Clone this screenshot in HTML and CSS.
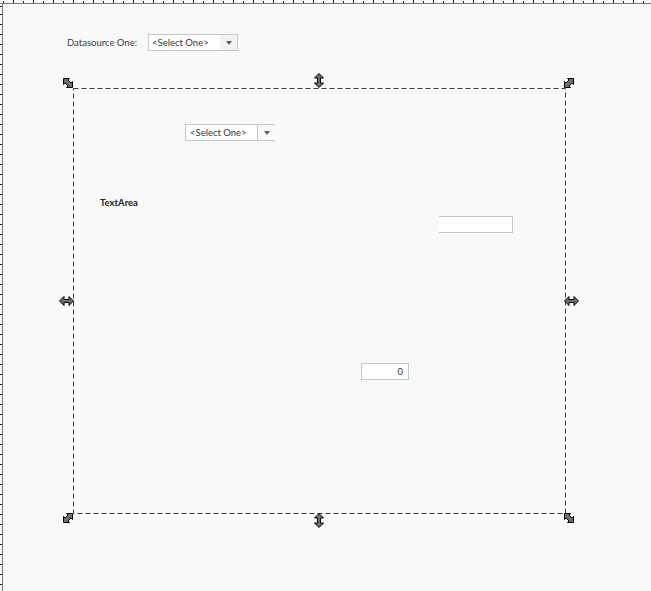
FILE: index.html
```html
<!DOCTYPE html>
<html lang="en">
<head>
    <meta charset="UTF-8">
    <meta name="viewport" content="width=device-width, initial-scale=1.0">
    <title>Form Designer</title>
    <link rel="stylesheet" href="styles.css">
</head>
<body>
    <div class="canvas">
        <div class="ruler-top"></div>
        <div class="ruler-left"></div>

        <!-- Datasource selector -->
        <div class="field-row datasource">
            <label class="field-label" for="ds1">Datasource One:</label>
            <div class="select" id="ds1">
                <span class="select-text">&lt;Select One&gt;</span>
                <span class="select-arrow"></span>
            </div>
        </div>

        <!-- Selected panel -->
        <div class="panel">
            <svg class="panel-border" width="494" height="427">
                <rect x="0.5" y="0.5" width="492" height="425" fill="none" stroke="#3c3c3c" stroke-dasharray="5 3"/>
            </svg>
        </div>

        <div class="select select-inner">
            <span class="select-text">&lt;Select One&gt;</span>
            <span class="select-arrow split"></span>
        </div>

        <div class="textarea-label">TextArea</div>
        <div class="text-input"></div>
        <div class="number-input">0</div>

        <!-- Resize handles -->
        <svg class="handle h-tl" width="10" height="10" viewBox="0 0 10 10"><polygon points="0.5,0.5 6.5,0.5 5,2 8,5 9.5,3.5 9.5,9.5 3.5,9.5 5,8 2,5 0.5,6.5" /></svg>
        <svg class="handle h-tr" width="10" height="10" viewBox="0 0 10 10"><polygon points="9.5,0.5 3.5,0.5 5,2 2,5 0.5,3.5 0.5,9.5 6.5,9.5 5,8 8,5 9.5,6.5" /></svg>
        <svg class="handle h-bl" width="10" height="10" viewBox="0 0 10 10"><polygon points="9.5,0.5 3.5,0.5 5,2 2,5 0.5,3.5 0.5,9.5 6.5,9.5 5,8 8,5 9.5,6.5" /></svg>
        <svg class="handle h-br" width="10" height="10" viewBox="0 0 10 10"><polygon points="0.5,0.5 6.5,0.5 5,2 8,5 9.5,3.5 9.5,9.5 3.5,9.5 5,8 2,5 0.5,6.5" /></svg>
        <svg class="handle h-tm" width="10" height="15" viewBox="0 0 10 15"><polygon points="5,0.5 9.5,5 6.5,5 6.5,10 9.5,10 5,14.5 0.5,10 3.5,10 3.5,5 0.5,5" /></svg>
        <svg class="handle h-bm" width="10" height="15" viewBox="0 0 10 15"><polygon points="5,0.5 9.5,5 6.5,5 6.5,10 9.5,10 5,14.5 0.5,10 3.5,10 3.5,5 0.5,5" /></svg>
        <svg class="handle h-ml" width="15" height="10" viewBox="0 0 15 10"><polygon points="0.5,5 5,0.5 5,3.5 10,3.5 10,0.5 14.5,5 10,9.5 10,6.5 5,6.5 5,9.5" /></svg>
        <svg class="handle h-mr" width="15" height="10" viewBox="0 0 15 10"><polygon points="0.5,5 5,0.5 5,3.5 10,3.5 10,0.5 14.5,5 10,9.5 10,6.5 5,6.5 5,9.5" /></svg>
    </div>
</body>
</html>
```

FILE: styles.css
```css
body {
    margin: 0;
    font-family: Lato, "Open Sans", Arial, sans-serif;
    background-color: #f9f9f9;
    color: #333;
}

.canvas {
    position: relative;
    width: 651px;
    height: 591px;
    overflow: hidden;
}

/* Rulers */
.ruler-top {
    position: absolute;
    left: 0;
    top: 0;
    right: 0;
    height: 3px;
    border-bottom: 1px solid #777;
    background-image:
        repeating-linear-gradient(to right, transparent 0 13px, #222 13px 14px, transparent 14px 20px),
        repeating-linear-gradient(to right, transparent 0 3px, #222 3px 4px, transparent 4px 20px);
    background-size: 100% 3px, 100% 2px;
    background-position: 0 0, 0 1px;
    background-repeat: no-repeat;
}

.ruler-left {
    position: absolute;
    left: 0;
    top: 3px;
    bottom: 0;
    width: 2px;
    border-right: 1px solid #777;
    background-image: repeating-linear-gradient(to bottom, transparent 0 1px, #222 1px 2px, transparent 2px 10px);
    background-position: 0 10px;
}

/* Fields */
.field-row {
    position: absolute;
    display: flex;
    align-items: center;
}

.datasource {
    left: 67px;
    top: 34px;
    gap: 11px;
}

.field-label {
    font-size: 9.5px;
    line-height: 17px;
    color: #3a3a44;
}

.select {
    display: flex;
    width: 90px;
    height: 17px;
    box-sizing: border-box;
    border: 1px solid #c4c8cd;
    background-color: #fff;
}

.select-text {
    flex: 1;
    font-size: 9.5px;
    line-height: 15px;
    padding-left: 3px;
    color: #333;
}

.select-arrow {
    width: 17px;
    background-color: #f1f2f4;
    position: relative;
}

.select-arrow::after {
    content: "";
    position: absolute;
    left: 6px;
    top: 6px;
    border-left: 3px solid transparent;
    border-right: 3px solid transparent;
    border-top: 4px solid #5a5f66;
}

.select-arrow.split {
    border-left: 1px solid #c4c8cd;
    background-color: #fafafa;
}

.select-inner {
    position: absolute;
    left: 185px;
    top: 124px;
    border-right: none;
}

.select-inner .select-text {
    padding-left: 4px;
}

.panel {
    position: absolute;
    left: 73px;
    top: 88px;
}

.panel-border {
    display: block;
}

.textarea-label {
    position: absolute;
    left: 100px;
    top: 197px;
    font-size: 9.5px;
    font-weight: bold;
    color: #222;
}

.text-input {
    position: absolute;
    left: 439px;
    top: 216px;
    width: 74px;
    height: 17px;
    box-sizing: border-box;
    border: 1px solid #c4c8cd;
    border-left: none;
    background-color: #fff;
}

.number-input {
    position: absolute;
    left: 361px;
    top: 363px;
    width: 48px;
    height: 17px;
    box-sizing: border-box;
    border: 1px solid #c4c8cd;
    background-color: #fff;
    font-size: 9.5px;
    line-height: 15px;
    text-align: right;
    padding-right: 5px;
    color: #333;
}

/* Resize handles */
.handle {
    position: absolute;
    display: block;
}

.handle polygon {
    fill: #6e6e6e;
    stroke: #000;
    stroke-width: 1;
    stroke-linejoin: miter;
}

.h-tl { left: 63px; top: 78px; }
.h-tr { left: 564px; top: 78px; }
.h-bl { left: 63px; top: 513px; }
.h-br { left: 564px; top: 513px; }
.h-tm { left: 314px; top: 73px; }
.h-bm { left: 314px; top: 513px; }
.h-ml { left: 59px; top: 296px; }
.h-mr { left: 564px; top: 296px; }
```
